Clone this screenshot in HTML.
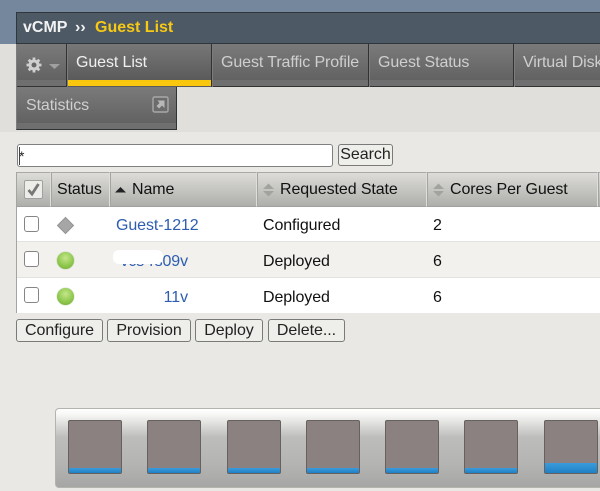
<!DOCTYPE html>
<html>
<head>
<meta charset="utf-8">
<style>
html,body{margin:0;padding:0;width:600px;height:491px;overflow:hidden;background:#e9e8e4;font-family:"Liberation Sans",Arial,sans-serif;}
#w{position:absolute;left:0;top:0;width:600px;height:491px;overflow:hidden;background:#e9e8e4;filter:blur(.35px);}
.a{position:absolute;box-sizing:border-box;}
.t{position:absolute;white-space:nowrap;font-size:16px;line-height:18px;letter-spacing:-.1px;}
.tab{position:absolute;box-sizing:border-box;top:44px;height:43px;background:linear-gradient(#7a7a7a 0,#626262 36px,#6f6f6f 36px,#6f6f6f 42px,#333 42px);border-right:1px solid #2f3336;border-left:1px solid #7c7c7c;}
.tab .t{top:10px;color:#cfcfcf;}
.th{position:absolute;box-sizing:border-box;top:172px;height:35px;background:linear-gradient(#dddcd8,#aeaeaa);border-top:1px solid #a8a8a6;border-bottom:1px solid #a0a09e;border-right:1px solid #dededa;border-left:1px solid #a4a4a2;}
.th .t{top:8px;color:#111;}
.row{position:absolute;left:17px;width:583px;}
.cb{position:absolute;left:24px;width:15px;height:16px;box-sizing:border-box;border:1.5px solid #858585;border-radius:3px;background:#fff;}
.led{position:absolute;left:57px;width:17px;height:17px;border-radius:50%;background:radial-gradient(circle at 50% 35%,#c4e68a,#8cc64a 60%,#6aa833);box-shadow:0 0 1px #7a9a60;}
.btn{position:absolute;box-sizing:border-box;top:319px;height:23px;border:1px solid #7a7a7a;border-radius:3px;background:#eeeeea;font-size:16px;line-height:21px;text-align:center;color:#222;letter-spacing:-.05px;}
.sq{position:absolute;top:420px;width:54px;height:54px;box-sizing:border-box;border:1px solid #66615f;border-radius:2px;background:#8b8181;overflow:hidden;}
.sq i{position:absolute;left:0;right:0;bottom:0;height:5px;background:linear-gradient(#3a9bdc,#1f80c4);}
.sort{position:absolute;top:9px;width:11px;height:16px;}
</style>
</head>
<body>
<div id="w">
<div class="a" style="left:0;top:0;width:600px;height:44px;background:#74879d;"></div>
<div class="a" style="left:0;top:44px;width:600px;height:88px;background:#e0dfdb;"></div>
<div class="a" style="left:16px;top:12px;width:584px;height:32px;background:#4d5965;border:1px solid #2f363c;border-right:0;"></div>
<div class="t" style="left:23px;top:19px;color:#f2f2f2;font-weight:bold;letter-spacing:0;">vCMP</div>
<div class="t" style="left:75px;top:19px;color:#f2f2f2;font-weight:bold;letter-spacing:0;">››</div>
<div class="t" style="left:95px;top:19px;color:#f6c915;font-weight:bold;letter-spacing:0;">Guest List</div>

<div class="tab" style="left:16px;width:51px;">
<svg style="position:absolute;left:7px;top:11px" width="36" height="22" viewBox="0 0 36 22">
<g fill="#cfcfcf"><circle cx="10" cy="10" r="5.500"/>
<g stroke="#cfcfcf" stroke-width="2.800"><path d="M10 2.500v15M2.500 10h15M4.700 4.700l10.600 10.600M15.300 4.700L4.700 15.300"/></g></g>
<circle cx="10" cy="10" r="2.500" fill="#666"/>
<path d="M25 9h11l-5.500 5z" fill="#a0a0a0"/></svg>
</div>
<div class="tab" style="left:67px;width:145px;background:linear-gradient(#777,#5a5a5a 36px);">
<div class="t" style="left:8px;color:#f0f0f0;">Guest List</div>
<div class="a" style="left:0;right:0;top:36px;height:6px;background:#f9c80e;"></div>
</div>
<div class="tab" style="left:212px;width:157px;"><div class="t" style="left:8px;">Guest Traffic Profile</div></div>
<div class="tab" style="left:369px;width:145px;"><div class="t" style="left:8px;">Guest Status</div></div>
<div class="tab" style="left:514px;width:90px;"><div class="t" style="left:8px;">Virtual Disk</div></div>
<div class="tab" style="left:16px;top:87px;width:161px;border-bottom:1px solid #2f3336;">
<div class="t" style="left:9px;">Statistics</div>
<svg style="position:absolute;left:135px;top:9px" width="17" height="17" viewBox="0 0 17 17">
<rect x="1" y="1" width="15" height="15" rx="1.500" fill="#6c6c6c" stroke="#a8a8a8" stroke-width="1.400"/>
<path d="M5.500 4.500h7V12L10 9.500 7 12.500 4.500 10 7.500 7z" fill="#b8b8b8"/></svg>
</div>

<div class="a" style="left:17px;top:144px;width:316px;height:23px;background:#fff;border:1px solid #808080;border-radius:3px;"></div>
<div class="t" style="left:19px;top:147px;color:#222;font-size:14px;">*</div>
<div class="a" style="left:19px;top:147px;width:1px;height:18px;background:#444;"></div>
<div class="btn" style="left:338px;top:144px;width:55px;height:22px;line-height:20px;">Search</div>

<div class="th" style="left:16px;width:35px;"></div>
<div class="a" style="left:24px;top:180px;width:19px;height:19px;background:#ecece9;border:1px solid #a0a0a0;border-radius:2px;"></div>
<svg style="position:absolute;left:26px;top:182px" width="15" height="15" viewBox="0 0 15 15"><path d="M2.500 8l3.500 4 6.500-10" fill="none" stroke="#777" stroke-width="2.800"/></svg>
<div class="th" style="left:51px;width:59px;"><div class="t" style="left:5px;">Status</div></div>
<div class="th" style="left:110px;width:147px;">
<svg class="sort" style="left:4px" viewBox="0 0 11 16"><path d="M0 10.500l5.500-5.500 5.500 5.500z" fill="#222"/></svg>
<div class="t" style="left:21px;">Name</div></div>
<div class="th" style="left:257px;width:170px;">
<svg class="sort" style="left:5px" viewBox="0 0 11 16"><path d="M0 7l5.500-5.500L11 7zM0 9l5.500 5.500L11 9z" fill="#a2a29e"/></svg>
<div class="t" style="left:22px;">Requested State</div></div>
<div class="th" style="left:427px;width:171px;">
<svg class="sort" style="left:5px" viewBox="0 0 11 16"><path d="M0 7l5.500-5.500L11 7zM0 9l5.500 5.500L11 9z" fill="#a2a29e"/></svg>
<div class="t" style="left:22px;">Cores Per Guest</div></div>
<div class="th" style="left:598px;width:10px;"></div>

<div class="a" style="left:16px;top:207px;width:1px;height:106px;background:#a4a4a2;"></div>
<div class="row" style="top:207px;height:35px;background:#fff;border-bottom:1px solid #e2e2de;box-sizing:border-box;"></div>
<div class="row" style="top:242px;height:36px;background:#f2f1ee;border-bottom:1px solid #e2e2de;box-sizing:border-box;"></div>
<div class="row" style="top:278px;height:35px;background:#fff;"></div>

<div class="cb" style="top:216px;"></div>
<div class="cb" style="top:251px;"></div>
<div class="cb" style="top:287px;"></div>
<svg style="position:absolute;left:56px;top:216px" width="19" height="19" viewBox="0 0 19 19"><path d="M9.500 1.500l8 8-8 8-8-8z" fill="#a6a6a6" stroke="#949494"/></svg>
<div class="led" style="top:252px;"></div>
<div class="led" style="top:288px;"></div>

<div class="t" style="left:116px;top:217px;color:#2d5db0;">Guest-1212</div>
<div class="t" style="left:188px;top:253px;color:#2d5db0;transform:translateX(-100%);">vcs-rs09v</div>
<div class="a" style="left:113px;top:250px;width:50px;height:14px;background:#fff;border-radius:6px;"></div>
<div class="t" style="left:188px;top:289px;color:#2d5db0;transform:translateX(-100%);">vcs-rs11v</div>
<div class="a" style="left:112px;top:286px;width:52px;height:18px;background:#fff;"></div>

<div class="t" style="left:263px;top:217px;color:#111;">Configured</div>
<div class="t" style="left:263px;top:253px;color:#111;">Deployed</div>
<div class="t" style="left:263px;top:289px;color:#111;">Deployed</div>
<div class="t" style="left:433px;top:217px;color:#111;">2</div>
<div class="t" style="left:433px;top:253px;color:#111;">6</div>
<div class="t" style="left:433px;top:289px;color:#111;">6</div>

<div class="btn" style="left:16px;width:87px;">Configure</div>
<div class="btn" style="left:107px;width:84px;">Provision</div>
<div class="btn" style="left:195px;width:68px;">Deploy</div>
<div class="btn" style="left:268px;width:77px;">Delete...</div>

<div class="a" style="left:55px;top:408px;width:550px;height:80px;border:1px solid #b5b3ae;border-radius:4px;background:linear-gradient(#fff 0,#f8f8f7 5px,#bdbdbc 28px,#b4b4b3 55px,#a6a6a5 100%);"></div>
<div class="sq" style="left:68px;"><i></i></div>
<div class="sq" style="left:147px;"><i></i></div>
<div class="sq" style="left:227px;"><i></i></div>
<div class="sq" style="left:306px;"><i></i></div>
<div class="sq" style="left:385px;"><i></i></div>
<div class="sq" style="left:464px;"><i></i></div>
<div class="sq" style="left:544px;"><i style="height:10px;"></i></div>
</div>
</body>
</html>
